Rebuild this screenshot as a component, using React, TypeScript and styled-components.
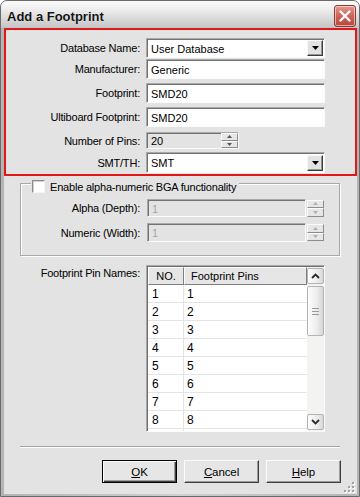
import React from "react";
import styled, { createGlobalStyle } from "styled-components";

const GlobalStyle = createGlobalStyle`
  html, body { margin: 0; padding: 0; background: #ffffff; }
  body { font-family: "Liberation Sans", Arial, sans-serif; font-size: 11px; color: #000; }
  * { box-sizing: border-box; }
`;

const Window = styled.div`
  width: 360px;
  height: 497px;
  display: flex;
  flex-direction: column;
  border: 1px solid #6b6b6b;
  border-radius: 7px 7px 0 0;
  background: #c4c4c4;
  overflow: hidden;
`;

const TitleBar = styled.div`
  height: 27px;
  flex: none;
  display: flex;
  justify-content: space-between;
  padding: 0 3px 0 6px;
  background: linear-gradient(#fbfbfb 0%, #ececec 35%, #d3d3d3 75%, #c3c3c3 100%);
`;

const Title = styled.span`
  align-self: center;
  padding-top: 3px;
  font: bold 13px "Liberation Sans", Arial, sans-serif;
  color: #141414;
  text-shadow: 0 0 1px rgba(255, 255, 255, 0.8);
`;

const CloseButton = styled.div`
  align-self: flex-end;
  margin-bottom: 1px;
  width: 22px;
  height: 22px;
  border-radius: 3px;
  border: 1px solid #8a3a32;
  box-shadow: inset 0 0 0 1px rgba(255, 255, 255, 0.55);
  background: linear-gradient(#e49a90 0%, #cf6357 50%, #b8463a 100%);
  display: flex;
  align-items: center;
  justify-content: center;
`;

const Frame = styled.div`
  flex: 1;
  display: flex;
  padding: 0 2px 2px 3px;
  background: linear-gradient(90deg, #b4b4b4, #cfcfcf 50%, #b4b4b4);
`;

const Client = styled.div`
  flex: 1;
  position: relative;
  display: flex;
  flex-direction: column;
  background: #e3e3e3;
`;

const Highlight = styled.div`
  height: 148px;
  flex: none;
  border: 2px solid #e01818;
  padding-top: 8px;
  display: flex;
  flex-direction: column;
`;

const FormRow = styled.div<{ $mt: number; $h: number }>`
  display: grid;
  grid-template-columns: 134px 179px;
  column-gap: 6px;
  align-items: center;
  margin-top: ${(p) => p.$mt}px;
  height: ${(p) => p.$h}px;
`;

const Label = styled.div`
  text-align: right;
  white-space: nowrap;
  letter-spacing: -0.2px;
  color: #000;
`;

const Field = styled.div<{ $w?: number; $bg?: string; $dim?: boolean }>`
  height: 100%;
  width: ${(p) => (p.$w ? `${p.$w}px` : "100%")};
  display: flex;
  align-items: center;
  padding-left: 4px;
  background: ${(p) => p.$bg ?? "#ffffff"};
  color: ${(p) => (p.$dim ? "#a6a6a6" : "#000")};
  border: 1px solid;
  border-color: #a9a9a9 #fbfbfb #fbfbfb #a9a9a9;
  box-shadow: inset 1px 1px 0 #727272;
  font-size: 11px;
  white-space: nowrap;
`;

const FieldText = styled.span`
  flex: 1;
  padding-top: 1px;
`;

const DropButton = styled.div`
  width: 16px;
  height: 16px;
  margin-right: 1px;
  flex: none;
  display: flex;
  align-items: center;
  justify-content: center;
  background: #e3e3e3;
  border: 1px solid;
  border-color: #f8f8f8 #3c3c3c #3c3c3c #f8f8f8;
  box-shadow: inset -1px -1px 0 #949494;
`;

const SpinStack = styled.div<{ $h: number }>`
  width: 17px;
  height: ${(p) => p.$h}px;
  flex: none;
  display: flex;
  flex-direction: column;
`;

const SpinHalf = styled.div`
  flex: 1;
  display: flex;
  align-items: center;
  justify-content: center;
  background: #e6e6e6;
  border: 1px solid;
  border-color: #fafafa #8c8c8c #8c8c8c #fafafa;
`;

const GroupBox = styled.div`
  position: relative;
  flex: none;
  height: 73px;
  margin: 7px 17px 0 16px;
  border: 1px solid #a8a8a8;
  box-shadow: inset 1px 1px 0 #fdfdfd, 1px 1px 0 #fdfdfd;
  padding: 15px 0 0 1px;
  display: flex;
  flex-direction: column;
`;

const Legend = styled.div`
  position: absolute;
  top: -4px;
  left: 10px;
  display: flex;
  align-items: center;
  gap: 5px;
  padding: 0 3px 0 1px;
  background: #e3e3e3;
  letter-spacing: -0.2px;
`;

const CheckBox = styled.div`
  width: 13px;
  height: 13px;
  background: #ffffff;
  border: 1px solid;
  border-color: #8d8d8d #f4f4f4 #f4f4f4 #8d8d8d;
  box-shadow: inset 1px 1px 0 #d0d0d0;
`;

const GroupRow = styled.div<{ $mt: number; $h: number }>`
  display: grid;
  grid-template-columns: 118px 177px;
  column-gap: 7px;
  align-items: center;
  margin-top: ${(p) => p.$mt}px;
  height: ${(p) => p.$h}px;
`;

const SpinPair = styled.div`
  height: 100%;
  display: flex;
  align-items: center;
  gap: 1px;
`;

const PinsRow = styled.div`
  display: grid;
  grid-template-columns: 134px 179px;
  column-gap: 6px;
  margin-top: 9px;
  padding-left: 2px;
`;

const PinsLabel = styled(Label)`
  padding-top: 2px;
`;

const Table = styled.div`
  height: 167px;
  display: flex;
  border: 1px solid;
  border-color: #a7a7a7 #fafafa #fafafa #a7a7a7;
  box-shadow: inset 1px 1px 0 #6f6f6f;
  padding: 1px 0 0 1px;
  background: #fff;
`;

const List = styled.div`
  flex: 1;
  display: flex;
  flex-direction: column;
  overflow: hidden;
`;

const HeaderRow = styled.div`
  display: grid;
  grid-template-columns: 36px 1fr;
  height: 18px;
  flex: none;
`;

const HeaderCell = styled.div<{ $center?: boolean }>`
  display: flex;
  align-items: center;
  justify-content: ${(p) => (p.$center ? "center" : "flex-start")};
  padding-left: ${(p) => (p.$center ? 0 : 6)}px;
  background: #e6e6e6;
  border: 1px solid;
  border-color: #fbfbfb #7f7f7f #7f7f7f #fbfbfb;
  font-size: 11px;
`;

const DataRow = styled.div`
  display: grid;
  grid-template-columns: 36px 1fr;
  height: 18px;
  flex: none;
  border-bottom: 1px solid #e4e4e4;
`;

const DataCell = styled.div<{ $first?: boolean }>`
  display: flex;
  align-items: center;
  padding-left: ${(p) => (p.$first ? 4 : 3)}px;
  border-right: ${(p) => (p.$first ? "1px solid #e4e4e4" : "none")};
  font-size: 12px;
`;

const ScrollBar = styled.div`
  width: 17px;
  flex: none;
  display: flex;
  flex-direction: column;
  background: #f3f3f1;
  padding: 1px 0 1px 0;
`;

const ScrollButton = styled.div`
  height: 16px;
  flex: none;
  display: flex;
  align-items: center;
  justify-content: center;
  border: 1px solid #b3b3b3;
  border-radius: 2px;
  background: linear-gradient(90deg, #fdfdfd, #ececec 60%, #d8d8d8);
`;

const Thumb = styled.div`
  height: 50px;
  margin-top: 2px;
  flex: none;
  display: flex;
  flex-direction: column;
  align-items: center;
  justify-content: center;
  gap: 2px;
  border: 1px solid #b3b3b3;
  border-radius: 2px;
  background: linear-gradient(90deg, #fdfdfd, #ececec 60%, #d6d6d6);
`;

const GripLine = styled.div`
  width: 7px;
  height: 1px;
  background: #9a9a9a;
`;

const Track = styled.div`
  flex: 1;
`;

const Separator = styled.div`
  height: 2px;
  flex: none;
  margin: 14px 17px 0 16px;
  border-top: 1px solid #a3a3a3;
  border-bottom: 1px solid #fdfdfd;
`;

const ButtonRow = styled.div`
  display: flex;
  justify-content: flex-end;
  gap: 7px;
  margin-top: 12px;
  padding-right: 16px;
`;

const PushButton = styled.div<{ $default?: boolean }>`
  width: 75px;
  height: 23px;
  display: flex;
  align-items: center;
  justify-content: center;
  background: #e6e6e6;
  border: 1px solid;
  border-color: ${(p) => (p.$default ? "#000" : "#fbfbfb #404040 #404040 #fbfbfb")};
  box-shadow: ${(p) =>
    p.$default
      ? "inset 1px 1px 0 #fbfbfb, inset -1px -1px 0 #404040, inset -2px -2px 0 #9a9a9a"
      : "inset -1px -1px 0 #9a9a9a"};
  font-size: 11.5px;
  letter-spacing: -0.1px;
`;

const Grip = styled.svg`
  position: absolute;
  right: 2px;
  bottom: 1px;
`;

const ComboArrow = () => (
  <svg width="7" height="4" viewBox="0 0 7 4">
    <polygon points="0,0 7,0 3.5,4" fill="#000" />
  </svg>
);

const TinyArrow = ({ up, color }: { up?: boolean; color: string }) => (
  <svg width="5" height="3" viewBox="0 0 5 3">
    <polygon points={up ? "2.5,0 5,3 0,3" : "0,0 5,0 2.5,3"} fill={color} />
  </svg>
);

const Chevron = ({ up }: { up?: boolean }) => (
  <svg width="9" height="6" viewBox="0 0 9 6">
    <path
      d={up ? "M1 5 L4.5 1.5 L8 5" : "M1 1 L4.5 4.5 L8 1"}
      fill="none"
      stroke="#2b2b2b"
      strokeWidth="1.8"
    />
  </svg>
);

const Spinner = ({ h, color }: { h: number; color: string }) => (
  <SpinStack $h={h}>
    <SpinHalf>
      <TinyArrow up color={color} />
    </SpinHalf>
    <SpinHalf>
      <TinyArrow color={color} />
    </SpinHalf>
  </SpinStack>
);

const pins = [1, 2, 3, 4, 5, 6, 7, 8, 9];

export default function App() {
  return (
    <>
      <GlobalStyle />
      <Window>
        <TitleBar>
          <Title>Add a Footprint</Title>
          <CloseButton>
            <svg width="12" height="12" viewBox="0 0 12 12">
              <path d="M1.5 1.5 L10.5 10.5 M10.5 1.5 L1.5 10.5" stroke="#fff" strokeWidth="2.4" strokeLinecap="round" />
            </svg>
          </CloseButton>
        </TitleBar>
        <Frame>
          <Client>
            <Highlight>
              <FormRow $mt={0} $h={20}>
                <Label>Database Name:</Label>
                <Field>
                  <FieldText>User Database</FieldText>
                  <DropButton>
                    <ComboArrow />
                  </DropButton>
                </Field>
              </FormRow>
              <FormRow $mt={1} $h={20}>
                <Label>Manufacturer:</Label>
                <Field>
                  <FieldText>Generic</FieldText>
                </Field>
              </FormRow>
              <FormRow $mt={4} $h={20}>
                <Label>Footprint:</Label>
                <Field>
                  <FieldText>SMD20</FieldText>
                </Field>
              </FormRow>
              <FormRow $mt={4} $h={20}>
                <Label>Ultiboard Footprint:</Label>
                <Field>
                  <FieldText>SMD20</FieldText>
                </Field>
              </FormRow>
              <FormRow $mt={5} $h={17}>
                <Label>Number of Pins:</Label>
                <Field $w={93} $bg="#e3e3e3">
                  <FieldText>20</FieldText>
                  <Spinner h={15} color="#555" />
                </Field>
              </FormRow>
              <FormRow $mt={3} $h={21}>
                <Label>SMT/TH:</Label>
                <Field>
                  <FieldText>SMT</FieldText>
                  <DropButton>
                    <ComboArrow />
                  </DropButton>
                </Field>
              </FormRow>
            </Highlight>

            <GroupBox>
              <Legend>
                <CheckBox />
                <span>Enable alpha-numeric BGA functionality</span>
              </Legend>
              <GroupRow $mt={0} $h={18}>
                <Label>Alpha (Depth):</Label>
                <SpinPair>
                  <Field $bg="#e3e3e3" $dim>
                    <FieldText>1</FieldText>
                  </Field>
                  <Spinner h={17} color="#b0b0b0" />
                </SpinPair>
              </GroupRow>
              <GroupRow $mt={6} $h={19}>
                <Label>Numeric (Width):</Label>
                <SpinPair>
                  <Field $bg="#e3e3e3" $dim>
                    <FieldText>1</FieldText>
                  </Field>
                  <Spinner h={17} color="#b0b0b0" />
                </SpinPair>
              </GroupRow>
            </GroupBox>

            <PinsRow>
              <PinsLabel>Footprint Pin Names:</PinsLabel>
              <Table>
                <List>
                  <HeaderRow>
                    <HeaderCell $center>NO.</HeaderCell>
                    <HeaderCell>Footprint Pins</HeaderCell>
                  </HeaderRow>
                  {pins.map((n) => (
                    <DataRow key={n}>
                      <DataCell $first>{n <= 8 ? n : ""}</DataCell>
                      <DataCell>{n <= 8 ? n : ""}</DataCell>
                    </DataRow>
                  ))}
                </List>
                <ScrollBar>
                  <ScrollButton>
                    <Chevron up />
                  </ScrollButton>
                  <Thumb>
                    <GripLine />
                    <GripLine />
                    <GripLine />
                  </Thumb>
                  <Track />
                  <ScrollButton>
                    <Chevron />
                  </ScrollButton>
                </ScrollBar>
              </Table>
            </PinsRow>

            <Separator />

            <ButtonRow>
              <PushButton $default>
                <span>
                  <u>O</u>K
                </span>
              </PushButton>
              <PushButton>
                <span>
                  <u>C</u>ancel
                </span>
              </PushButton>
              <PushButton>
                <span>
                  <u>H</u>elp
                </span>
              </PushButton>
            </ButtonRow>

            <Grip width="12" height="12" viewBox="0 0 12 12">
              {[
                [9, 1],
                [5, 5],
                [9, 5],
                [1, 9],
                [5, 9],
                [9, 9],
              ].map(([x, y]) => (
                <g key={`${x}-${y}`}>
                  <rect x={x + 1} y={y + 1} width="2" height="2" fill="#ffffff" />
                  <rect x={x} y={y} width="2" height="2" fill="#a0a0a0" />
                </g>
              ))}
            </Grip>
          </Client>
        </Frame>
      </Window>
    </>
  );
}
